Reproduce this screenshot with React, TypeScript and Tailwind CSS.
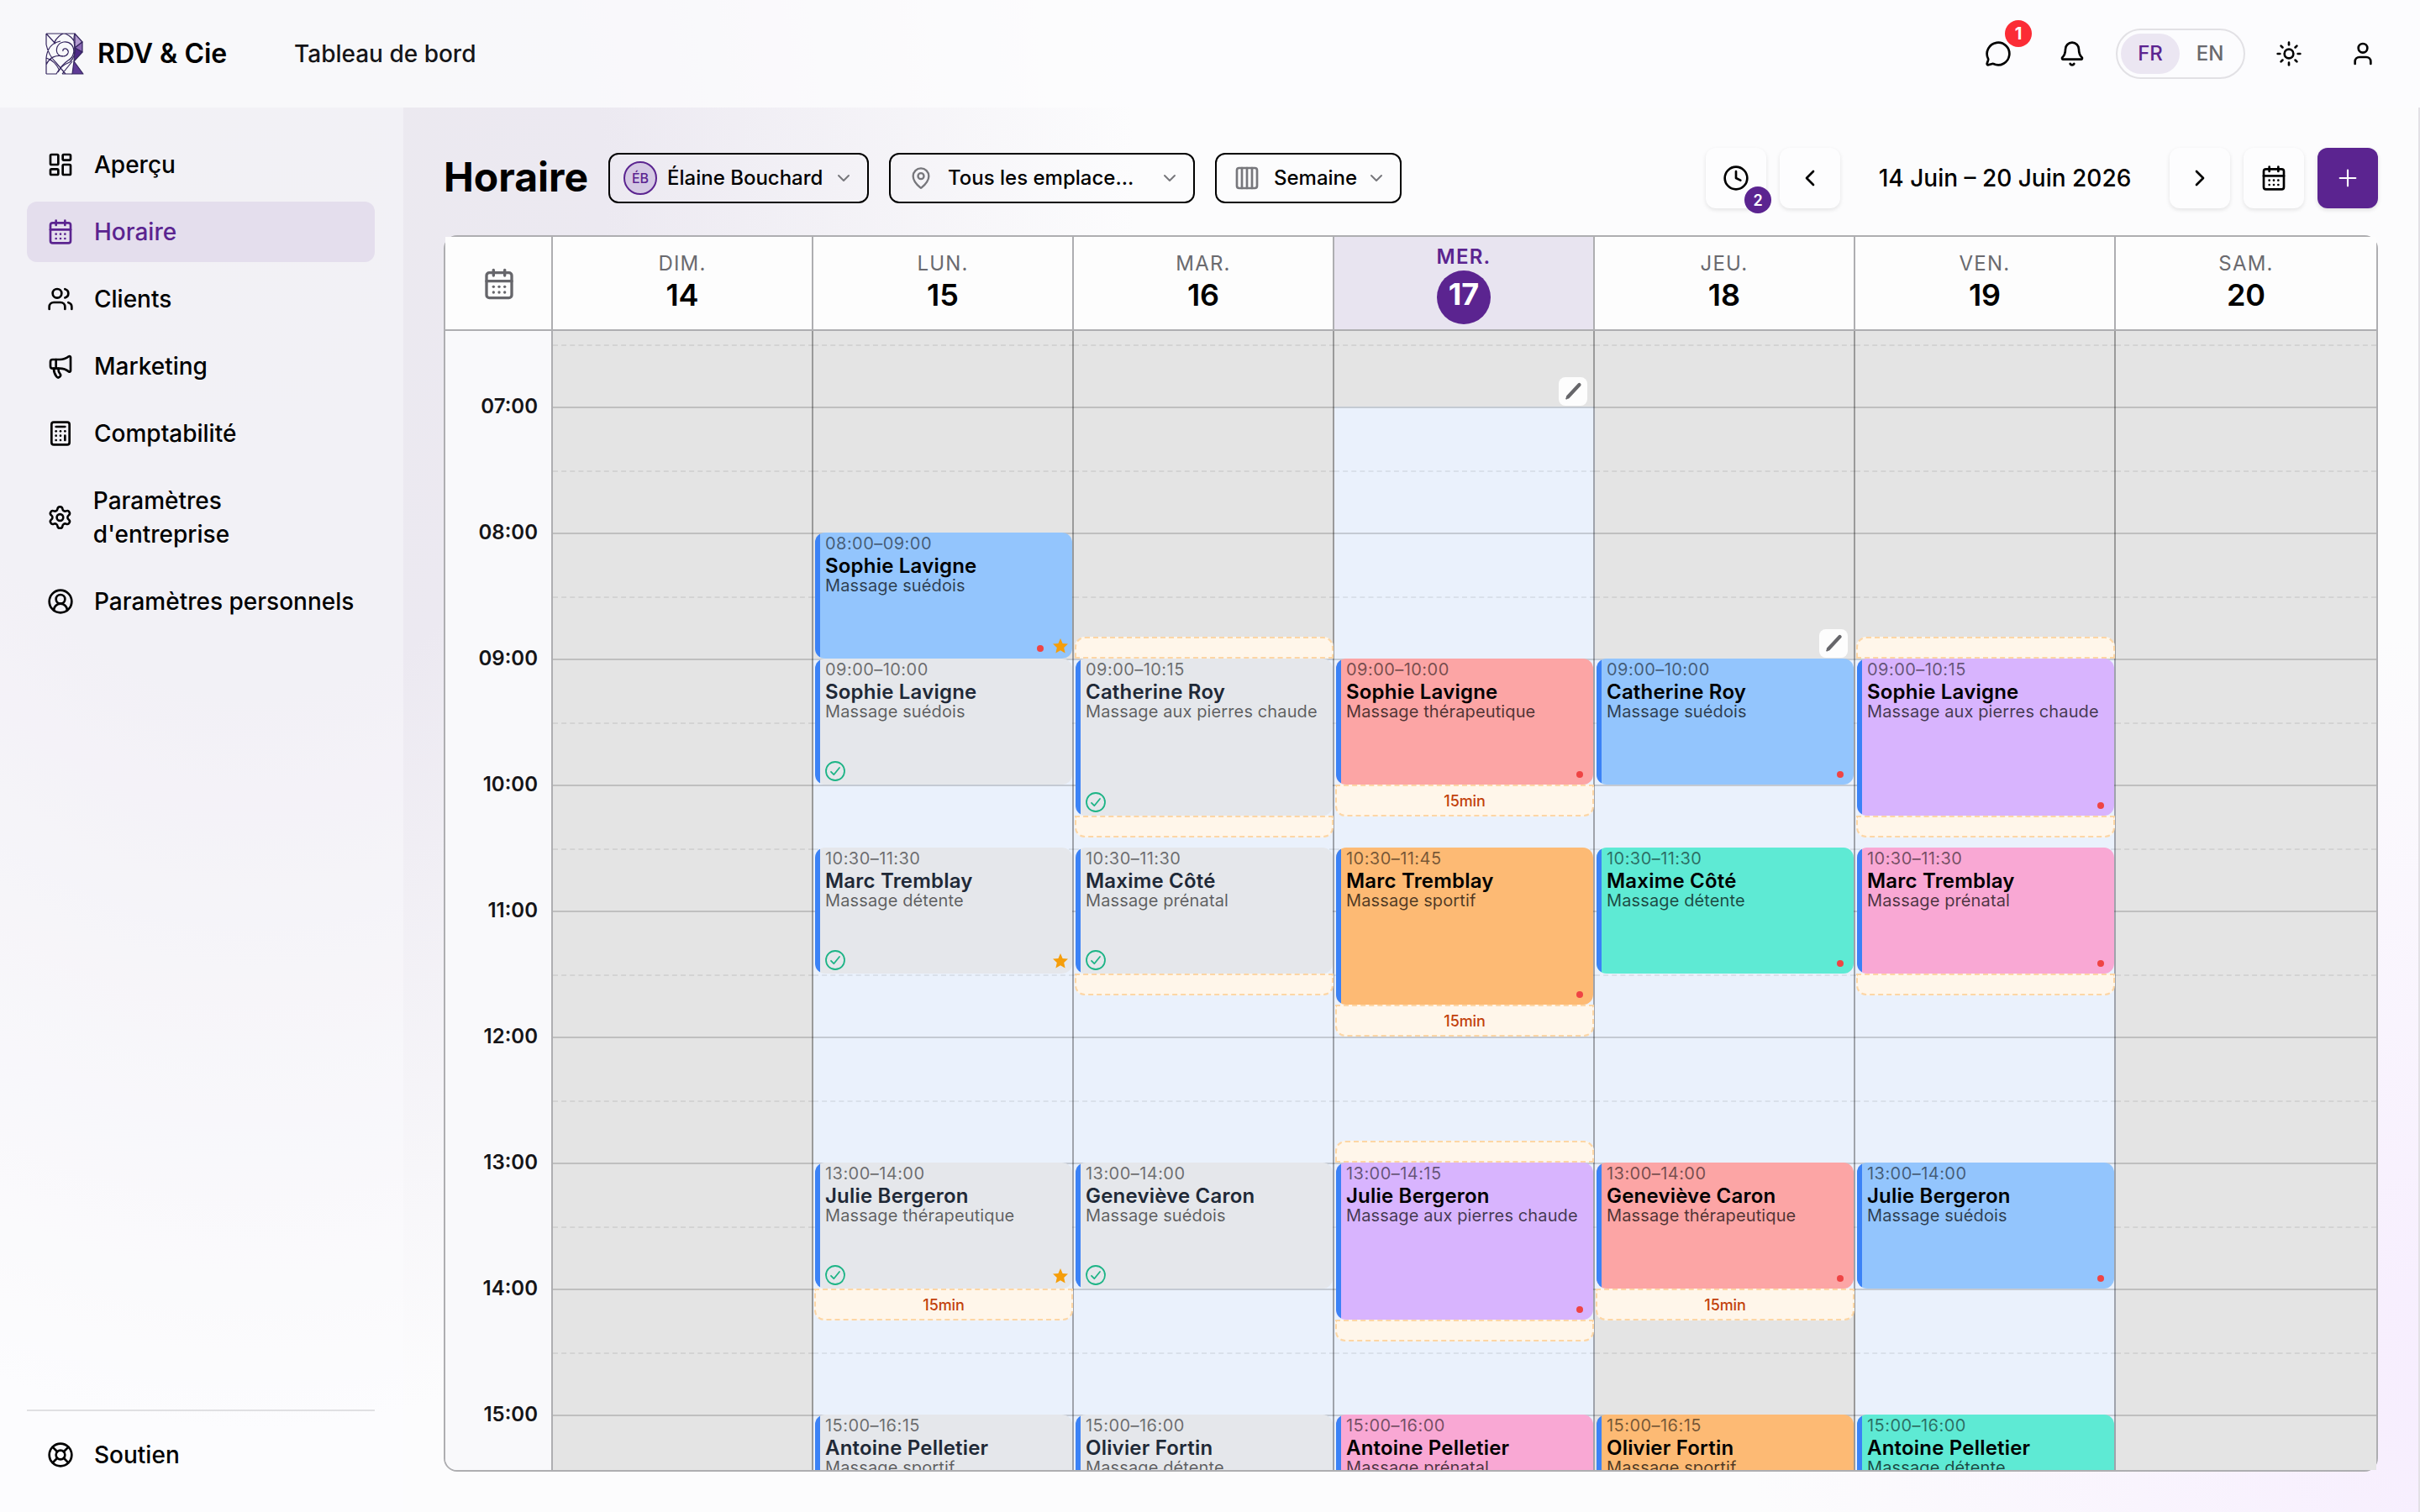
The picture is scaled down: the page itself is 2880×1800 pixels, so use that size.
import React from 'react';
import {
  Bell,
  Calculator,
  CalendarDays,
  ChevronDown,
  ChevronLeft,
  ChevronRight,
  CircleUserRound,
  Clock,
  Columns4,
  LayoutDashboard,
  LifeBuoy,
  MapPin,
  Megaphone,
  MessageCircle,
  Plus,
  Settings,
  Sun,
  User,
  Users,
} from 'lucide-react';
import clsx from 'clsx';

type Color = 'gray' | 'blue' | 'red' | 'orange' | 'purple' | 'pink' | 'teal';

interface Appointment {
  start: number;
  end: number;
  client: string;
  service: string;
  color: Color;
  paid?: boolean;
  star?: boolean;
  dot?: boolean;
  before?: number;
  after?: number;
}

interface Day {
  label: string;
  date: number;
  today?: boolean;
  open?: [number, number];
  edit?: number;
  items: Appointment[];
}

const HOUR = 150;
const FIRST = 6.4;
const HOURS = [7, 8, 9, 10, 11, 12, 13, 14, 15];

// half pixels snap down
const px = (hours: number) => Math.round(hours * HOUR - 0.1);
const top = (h: number) => px(h - FIRST);

const fmt = (h: number) => {
  const m = Math.round((h % 1) * 60);
  return `${String(Math.floor(h)).padStart(2, '0')}:${String(m).padStart(2, '0')}`;
};

const COLORS: Record<Color, string> = {
  gray: 'bg-[#e5e7eb]',
  blue: 'bg-[#93c5fd]',
  red: 'bg-[#fca5a5]',
  orange: 'bg-[#fdba74]',
  purple: 'bg-[#d8b4fe]',
  pink: 'bg-[#f9a8d4]',
  teal: 'bg-[#5eead4]',
};

const DAYS: Day[] = [
  { label: 'DIM.', date: 14, items: [] },
  {
    label: 'LUN.',
    date: 15,
    open: [9, 17],
    items: [
      { start: 8, end: 9, client: 'Sophie Lavigne', service: 'Massage suédois', color: 'blue', dot: true, star: true },
      { start: 9, end: 10, client: 'Sophie Lavigne', service: 'Massage suédois', color: 'gray', paid: true },
      { start: 10.5, end: 11.5, client: 'Marc Tremblay', service: 'Massage détente', color: 'gray', paid: true, star: true },
      { start: 13, end: 14, client: 'Julie Bergeron', service: 'Massage thérapeutique', color: 'gray', paid: true, star: true, after: 15 },
      { start: 15, end: 16.25, client: 'Antoine Pelletier', service: 'Massage sportif', color: 'gray' },
    ],
  },
  {
    label: 'MAR.',
    date: 16,
    open: [9, 17],
    items: [
      { start: 9, end: 10.25, client: 'Catherine Roy', service: 'Massage aux pierres chaude', color: 'gray', paid: true, before: 10, after: 10 },
      { start: 10.5, end: 11.5, client: 'Maxime Côté', service: 'Massage prénatal', color: 'gray', paid: true, after: 10 },
      { start: 13, end: 14, client: 'Geneviève Caron', service: 'Massage suédois', color: 'gray', paid: true },
      { start: 15, end: 16, client: 'Olivier Fortin', service: 'Massage détente', color: 'gray' },
    ],
  },
  {
    label: 'MER.',
    date: 17,
    today: true,
    open: [7, 17],
    edit: 7,
    items: [
      { start: 9, end: 10, client: 'Sophie Lavigne', service: 'Massage thérapeutique', color: 'red', dot: true, after: 15 },
      { start: 10.5, end: 11.75, client: 'Marc Tremblay', service: 'Massage sportif', color: 'orange', dot: true, after: 15 },
      { start: 13, end: 14.25, client: 'Julie Bergeron', service: 'Massage aux pierres chaude', color: 'purple', dot: true, before: 10, after: 10 },
      { start: 15, end: 16, client: 'Antoine Pelletier', service: 'Massage prénatal', color: 'pink' },
    ],
  },
  {
    label: 'JEU.',
    date: 18,
    open: [9, 14],
    edit: 9,
    items: [
      { start: 9, end: 10, client: 'Catherine Roy', service: 'Massage suédois', color: 'blue', dot: true },
      { start: 10.5, end: 11.5, client: 'Maxime Côté', service: 'Massage détente', color: 'teal', dot: true },
      { start: 13, end: 14, client: 'Geneviève Caron', service: 'Massage thérapeutique', color: 'red', dot: true, after: 15 },
      { start: 15, end: 16.25, client: 'Olivier Fortin', service: 'Massage sportif', color: 'orange' },
    ],
  },
  {
    label: 'VEN.',
    date: 19,
    open: [9, 17],
    items: [
      { start: 9, end: 10.25, client: 'Sophie Lavigne', service: 'Massage aux pierres chaude', color: 'purple', dot: true, before: 10, after: 10 },
      { start: 10.5, end: 11.5, client: 'Marc Tremblay', service: 'Massage prénatal', color: 'pink', dot: true, after: 10 },
      { start: 13, end: 14, client: 'Julie Bergeron', service: 'Massage suédois', color: 'blue', dot: true },
      { start: 15, end: 16, client: 'Antoine Pelletier', service: 'Massage détente', color: 'teal' },
    ],
  },
  { label: 'SAM.', date: 20, items: [] },
];

const NAV = [
  { label: 'Aperçu', icon: LayoutDashboard },
  { label: 'Horaire', icon: CalendarDays, active: true },
  { label: 'Clients', icon: Users },
  { label: 'Marketing', icon: Megaphone },
  { label: 'Comptabilité', icon: Calculator },
  { label: "Paramètres d'entreprise", icon: Settings },
  { label: 'Paramètres personnels', icon: CircleUserRound },
];

const Logo = () => (
  <svg viewBox="0 0 46 50" className="h-[50px] w-[46px]" fill="none" stroke="#35265f" strokeWidth="1.2" strokeLinejoin="round">
    <path d="M35 1l9 10-9 7z" fill="#b39bd0" />
    <path d="M44 11v12l-9-5z" fill="#8a68b5" />
    <path d="M44 23l-10 11 1-16z" fill="#4c2885" />
    <path d="M34 34l11 15H32z" fill="#5f3c96" />
    <path d="M1 1h34c-2 5-1 11 0 17M1 1v13c2 10 6 16 12 22l11 13M1 49V30C2 20 7 12 18 10M1 49h12c3-6 8-11 16-14M1 30c7 2 13 9 16 15M1 38c4-9 12-12 20-10M1 1l11 12M10 13C13 5 20 1 22 1s10 3 13 11M20 49h12M20 49l12-15" />
    <path d="M21 22c-1-3 3-4 5-2 3 3 0 8-5 8-6 0-9-5-7-11 3-7 12-8 17-3 5 6 3 15-4 19-6 4-9 8-12 14" />
    <path d="M35 18c1 6-1 12-6 17" />
  </svg>
);

const Header = () => (
  <header className="flex h-[128px] shrink-0 items-center bg-[#fcfcfe]/75 pr-8 pl-[54px]">
    <Logo />
    <span className="ml-4 w-[234px] text-[32px] font-semibold whitespace-nowrap">RDV &amp; Cie</span>
    <span className="text-[28px] font-medium text-[#151518]">Tableau de bord</span>
    <div className="ml-auto flex items-center gap-4">
      <button className="relative flex size-[72px] items-center justify-center">
        <MessageCircle size={32} />
        <span className="absolute -top-1 -right-1 flex size-8 items-center justify-center rounded-full bg-[#fb2c36] text-[20px] font-bold text-white">
          1
        </span>
      </button>
      <button className="flex size-[72px] items-center justify-center">
        <Bell size={32} />
      </button>
      <div className="flex h-[60px] w-[154px] items-center rounded-full border-2 border-[#e2e1e5] px-1 text-[24px] font-medium">
        <span className="flex h-12 w-[70px] items-center justify-center rounded-full bg-[#ebe6f2] text-[#5b2490]">FR</span>
        <span className="flex h-12 flex-1 items-center justify-center text-[#69696e]">EN</span>
      </div>
      <button className="flex size-[72px] items-center justify-center">
        <Sun size={32} />
      </button>
      <button className="flex size-[72px] items-center justify-center">
        <User size={32} />
      </button>
    </div>
  </header>
);

const Sidebar = () => (
  <aside className="flex w-[480px] shrink-0 flex-col bg-[#fdfdff]/40 py-8 pr-[34px] pl-8 text-[28px] leading-10 font-medium">
    <nav className="flex flex-col gap-2">
      {NAV.map(({ label, icon: Icon, active }) => (
        <a
          key={label}
          className={clsx('flex items-center gap-6 rounded-xl px-6 py-4', active && 'bg-[#e4deed] text-[#5b2490]')}
        >
          <Icon size={32} />
          <span>{label}</span>
        </a>
      ))}
    </nav>
    <div className="mt-auto border-t-2 border-[#e0e0e3] pt-4">
      <a className="flex items-center gap-6 px-6 py-4">
        <LifeBuoy size={32} />
        <span>Soutien</span>
      </a>
    </div>
  </aside>
);

interface SelectProps {
  icon: React.ReactNode;
  label: string;
  className: string;
}

const Select: React.FC<SelectProps> = ({ icon, label, className }) => (
  <button className={clsx('flex h-[60px] items-center rounded-xl border-2 border-black text-[24px] font-medium', className)}>
    {icon}
    <span className="whitespace-nowrap">{label}</span>
    <ChevronDown size={24} className="ml-auto text-[#77777c]" />
  </button>
);

const Toolbar = () => {
  const square = 'relative flex size-[72px] items-center justify-center rounded-xl bg-[#fdfdfe] shadow-[0_2px_5px_rgba(0,0,0,0.1)]';
  return (
    <div className="flex h-[72px] items-center">
      <h1 className="w-[196px] pb-0.5 text-[48px] leading-[68px] font-bold">Horaire</h1>
      <Select
        className="w-[310px] pr-4 pl-4"
        label="Élaine Bouchard"
        icon={
          <span className="mr-3 flex size-10 items-center justify-center rounded-full border-2 border-[#5b2490] bg-[#d5c9e4] text-[16px] text-[#5b2490]">
            ÉB
          </span>
        }
      />
      <Select
        className="ml-6 w-[364px] pr-4 pl-[22px]"
        label="Tous les emplace..."
        icon={<MapPin size={28} className="mr-[18px] text-[#77777c]" />}
      />
      <Select
        className="ml-6 w-[222px] pr-4 pl-5"
        label="Semaine"
        icon={<Columns4 size={32} className="mr-4 text-[#77777c]" />}
      />
      <div className="ml-auto flex items-center gap-4">
        <button className={square}>
          <Clock size={32} />
          <span className="absolute -right-1.5 -bottom-1.5 flex size-8 items-center justify-center rounded-full bg-[#5b2490] text-[18px] font-semibold text-white">
            2
          </span>
        </button>
        <button className={square}>
          <ChevronLeft size={32} />
        </button>
        <span className="w-[360px] text-center text-[28px] font-medium whitespace-nowrap">14 Juin – 20 Juin 2026</span>
        <button className={square}>
          <ChevronRight size={32} />
        </button>
        <button className={square}>
          <CalendarDays size={32} />
        </button>
        <button className="flex size-[72px] items-center justify-center rounded-xl bg-[#5b2490] text-white shadow-[0_2px_5px_rgba(0,0,0,0.12)]">
          <Plus size={32} strokeWidth={1.6} />
        </button>
      </div>
    </div>
  );
};

const Check = () => (
  <svg viewBox="0 0 24 24" className="size-6" fill="none" stroke="#1db486" strokeWidth="1.8" strokeLinecap="round" strokeLinejoin="round">
    <circle cx="12" cy="12" r="11" />
    <path d="M7 12.8l3.3 3.4L17 8" />
  </svg>
);

const Star = () => (
  <svg viewBox="0 0 18 18" className="size-[18px]" fill="#f59e0b">
    <path d="M9 0l2.6 5.9 6.4.7-4.8 4.3 1.4 6.6L9 14.2l-5.6 3.3 1.4-6.6L0 6.6l6.4-.7z" />
  </svg>
);

const Buffer: React.FC<{ at: number; minutes: number; before?: boolean }> = ({ at, minutes, before }) => (
  <div
    className={clsx(
      'absolute right-[-1px] left-px flex items-center justify-center border-2 border-dashed border-[#fdd6a5] bg-[#fff6ea] text-[18px] font-medium tracking-[-0.1px] text-[#c2410c]',
      before ? 'rounded-t-xl' : 'rounded-b-xl',
    )}
    style={{ top: top(at) - (before ? 1 : 0), height: px(minutes / 60) + 1 }}
  >
    {minutes >= 15 && `${minutes}min`}
  </div>
);

const Card: React.FC<{ item: Appointment }> = ({ item }) => {
  const past = item.color === 'gray';
  return (
    <>
      {item.before && <Buffer at={item.start - item.before / 60} minutes={item.before} before />}
      {item.after && <Buffer at={item.end} minutes={item.after} />}
      <div
        className={clsx('absolute right-0 left-0.5 overflow-hidden rounded-xl', COLORS[item.color])}
        style={{ top: top(item.start), height: px(item.end - item.start) }}
      >
        <div className="absolute inset-y-0 left-0 w-1.5 bg-[#3b82f6]" />
        <div className="pl-3 whitespace-nowrap">
          <div className="text-[20px] leading-[26px] tracking-[0.45px] text-black/55">
            {fmt(item.start)}–{fmt(item.end)}
          </div>
          <div className={clsx('text-[24px] leading-7 font-semibold tracking-[0.2px]', past ? 'text-[#1f2937]' : 'text-black')}>
            {item.client}
          </div>
          <div className={clsx('text-[20px] leading-[18px] tracking-[0.12px]', past ? 'text-black/60' : 'text-black/70')}>{item.service}</div>
        </div>
        {item.paid && (
          <div className="absolute bottom-1 left-3">
            <Check />
          </div>
        )}
        {item.star && (
          <div className="absolute right-[5px] bottom-1.5">
            <Star />
          </div>
        )}
        {item.dot && <div className={clsx('absolute bottom-2 size-2 rounded-full bg-[#ef4444]', item.star ? 'right-[34px]' : 'right-3')} />}
      </div>
    </>
  );
};

const EditButton: React.FC<{ at: number }> = ({ at }) => (
  <button
    className="absolute right-[7px] flex size-[34px] items-center justify-center rounded-lg bg-[#fdfdfd]"
    style={{ top: top(at) - 35 }}
  >
    <svg viewBox="0 0 24 24" className="size-6" stroke="#66666a" strokeLinecap="round">
      <path d="M6 18.5L19.5 4" strokeWidth="4.2" />
      <path d="M4.2 20.5L6 18.5" strokeWidth="2" />
    </svg>
  </button>
);

const DayColumn: React.FC<{ day: Day; last: boolean }> = ({ day, last }) => (
  <div className="relative h-full bg-[#e4e4e4]">
    {day.open && (
      <div
        className="absolute inset-x-0 bg-[#eaf1fc]"
        style={{ top: top(day.open[0]), height: px(day.open[1] - day.open[0]) }}
      />
    )}
    <div className="absolute inset-x-0 top-4 border-t-2 border-dashed border-black/7" />
    {HOURS.map((h) => (
      <React.Fragment key={h}>
        <div className="absolute inset-x-0 h-0.5 bg-black/16" style={{ top: top(h) }} />
        <div className="absolute inset-x-0 border-t-2 border-dashed border-black/7" style={{ top: top(h) + 76 }} />
      </React.Fragment>
    ))}
    {!last && <div className="absolute inset-y-0 right-0 w-0.5 bg-black/32" />}
    <div className="absolute inset-y-0 right-0.5 left-0">
      {day.items.map((item) => (
        <Card key={item.start} item={item} />
      ))}
      {day.edit && <EditButton at={day.edit} />}
    </div>
  </div>
);

const WeekCalendar = () => (
  <div className="mt-8 flex h-[1472px] flex-col rounded-2xl border-2 border-[#aeaeb1]">
    <div className="grid h-[112px] shrink-0 grid-cols-[128px_repeat(6,310px)_1fr] border-b-2 border-[#aeaeb1] bg-[#fdfdfd]">
      <div className="flex items-center justify-center border-r-2 border-[#aeaeb1] pt-0.5 pl-0.5 text-[#66666b]">
        <CalendarDays size={40} />
      </div>
      {DAYS.map((day) => (
        <div
          key={day.date}
          className={clsx(
            'flex flex-col items-center justify-center',
            day.date !== 20 && 'border-r-2 border-[#aeaeb1]',
            day.today ? 'bg-[#e8e4f0] pt-0.5' : 'pb-1',
          )}
        >
          <span className={clsx('text-[24px] leading-8 tracking-[1.2px]', day.today ? 'font-semibold text-[#5b2490]' : 'text-[#6a6a6f]')}>
            {day.label}
          </span>
          {day.today ? (
            <span className="flex size-16 items-start justify-center rounded-full bg-[#5b2490] pt-2 text-[36px] leading-10 font-bold text-white">
              {day.date}
            </span>
          ) : (
            <span className="text-[36px] leading-[42px] font-semibold">{day.date}</span>
          )}
        </div>
      ))}
    </div>
    <div className="grid min-h-0 flex-1 grid-cols-[128px_repeat(6,310px)_1fr] overflow-hidden rounded-bl-[14px]">
      <div className="relative border-r-2 border-[#aeaeb1] bg-[#f9f9fb]">
        {HOURS.map((h) => (
          <span
            key={h}
            className="absolute right-4 text-[24px] leading-8 font-semibold text-[#151518]"
            style={{ top: top(h) - 16 }}
          >
            {fmt(h)}
          </span>
        ))}
      </div>
      {DAYS.map((day) => (
        <DayColumn key={day.date} day={day} last={day.date === 20} />
      ))}
    </div>
  </div>
);

export default function App() {
  return (
    <div className="flex h-screen w-full flex-col overflow-hidden bg-[#fcfcfd] bg-[radial-gradient(ellipse_1050px_1450px_at_300px_250px,#ebe9ef_0%,#ece9f1_40%,#fcfcfd00_100%),radial-gradient(ellipse_900px_900px_at_2980px_1650px,#f6ecfe_0%,#fcfcfd00_100%)] font-['Inter',sans-serif] text-black">
      <Header />
      <div className="flex min-h-0 flex-1">
        <Sidebar />
        <main className="min-w-0 flex-1 border-r-2 border-[#e3e1e6] px-12 py-12">
          <Toolbar />
          <WeekCalendar />
        </main>
      </div>
    </div>
  );
}
